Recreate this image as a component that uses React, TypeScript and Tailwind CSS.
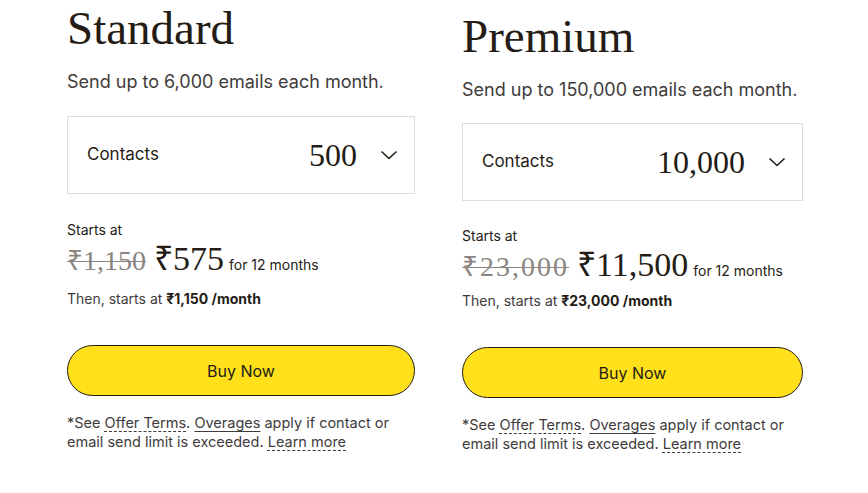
import { ReactNode } from "react";

interface PlanProps {
  name: string;
  sends: string;
  contacts: string;
  oldPrice: string;
  price: string;
  monthly: string;
  className?: string;
  tight?: boolean;
}

const sans = "font-['Inter','Liberation_Sans',sans-serif]";
const serif = "font-['Liberation_Serif','Times_New_Roman',serif]";

function Chevron() {
  return (
    <svg width="18" height="10" viewBox="0 0 18 10" fill="none" className="text-[#241c15]">
      <path d="M1.5 1.5 L9 8.5 L16.5 1.5" stroke="currentColor" strokeWidth="1.6" />
    </svg>
  );
}

function Dashed({ children }: { children: ReactNode }) {
  return (
    <span className="underline decoration-dashed decoration-1 underline-offset-[3px]">
      {children}
    </span>
  );
}

function Plan({ name, sends, contacts, oldPrice, price, monthly, className, tight }: PlanProps) {
  return (
    <div className={`flex flex-col text-[#241c15] ${className ?? ""}`}>
      <h2 className={`${serif} text-[47px] leading-[52px]`}>{name}</h2>

      <p className={`${sans} mt-[16px] text-[18px] leading-[24px] text-[#403b3b]`}>{sends}</p>

      <div
        className={`${tight ? "mt-[21px]" : "mt-[22px]"} flex h-[78px] items-center justify-between border border-[#dcdcdc] pl-[19px] pr-[16px]`}
      >
        <span className={`${sans} text-[17px]`}>Contacts</span>
        <div className="flex items-center gap-[23px]">
          <span className={`${serif} text-[32px]`}>{contacts}</span>
          <Chevron />
        </div>
      </div>

      <p className={`${sans} ${tight ? "mt-[26px]" : "mt-[27px]"} text-[14px] leading-[18px]`}>Starts at</p>

      <div className="mt-[3px] flex items-baseline">
        <span
          className={`${serif} ${tight ? "tracking-[2px]" : ""} text-[28px] leading-[34px] text-[#8a8580] line-through decoration-1`}
        >
          {oldPrice}
        </span>
        <span className={`${serif} ml-[8px] text-[34px] leading-[34px]`}>{price}</span>
        <span className={`${sans} ml-[5px] text-[14px]`}>for 12 months</span>
      </div>

      <p className={`${sans} ${tight ? "mt-[8px]" : "mt-[12px]"} text-[14px] leading-[18px] text-[#403b3b]`}>
        Then, starts at <b className="text-[#241c15]">{monthly} /month</b>
      </p>

      <button
        className={`${sans} mt-[37px] h-[51px] w-full rounded-full border border-[#241c15] bg-[#ffe01b] text-[16px]`}
      >
        Buy Now
      </button>

      <p className={`${sans} mt-[17px] text-[14.5px] leading-[19px] text-[#403b3b]`}>
        *See <Dashed>Offer Terms</Dashed>. <span className="underline underline-offset-[3px]">Overages</span> apply
        if contact or email send limit is exceeded. <Dashed>Learn more</Dashed>
      </p>
    </div>
  );
}

export default function App() {
  return (
    <div className="flex h-[493px] w-[868px] items-start gap-[47px] bg-white pl-[67px] pt-[2px]">
      <Plan
        className="w-[348px]"
        name="Standard"
        sends="Send up to 6,000 emails each month."
        contacts="500"
        oldPrice="₹1,150"
        price="₹575"
        monthly="₹1,150"
      />
      <Plan
        className="mt-[8px] w-[341px]"
        tight
        name="Premium"
        sends="Send up to 150,000 emails each month."
        contacts="10,000"
        oldPrice="₹23,000"
        price="₹11,500"
        monthly="₹23,000"
      />
    </div>
  );
}
